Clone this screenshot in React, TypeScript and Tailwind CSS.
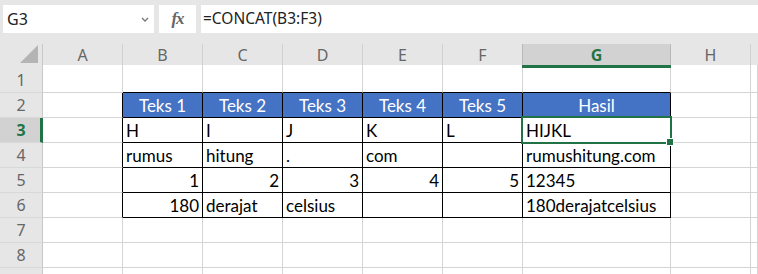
import React from "react";

const cols = ["A", "B", "C", "D", "E", "F", "G", "H", ""];
const GREEN = "#217346";

type CellData = { t: string; align?: "l" | "r" | "c" };

const data: Record<number, CellData[]> = {
  2: [
    { t: "Teks 1", align: "c" },
    { t: "Teks 2", align: "c" },
    { t: "Teks 3", align: "c" },
    { t: "Teks 4", align: "c" },
    { t: "Teks 5", align: "c" },
    { t: "Hasil", align: "c" },
  ],
  3: [{ t: "H" }, { t: "I" }, { t: "J" }, { t: "K" }, { t: "L" }, { t: "HIJKL" }],
  4: [{ t: "rumus" }, { t: "hitung" }, { t: "." }, { t: "com" }, { t: "" }, { t: "rumushitung.com" }],
  5: [
    { t: "1", align: "r" },
    { t: "2", align: "r" },
    { t: "3", align: "r" },
    { t: "4", align: "r" },
    { t: "5", align: "r" },
    { t: "12345" },
  ],
  6: [{ t: "180", align: "r" }, { t: "derajat" }, { t: "celsius" }, { t: "" }, { t: "" }, { t: "180derajatcelsius" }],
};

const cellFont = { fontFamily: "Lato, 'Liberation Sans', sans-serif" };

function BodyCell({ r, c }: { r: number; c: number }) {
  const inTableCol = c >= 1 && c <= 6;
  const rightBlack = r >= 2 && r <= 6 && c >= 0 && c <= 6;
  const bottomBlack = inTableCol && r >= 1 && r <= 6;
  const isHeader = r === 2 && inTableCol;
  const d = inTableCol && data[r] ? data[r][c - 1] : undefined;
  const align = d?.align ?? "l";
  const justify =
    align === "c" ? "justify-center" : align === "r" ? "justify-end pr-[3px]" : "justify-start pl-[3px]";
  return (
    <div
      className={[
        "h-[25px] flex items-end pb-[3px] leading-none text-[17px] whitespace-nowrap overflow-visible border-r border-b",
        rightBlack ? "border-r-black" : "border-r-[#d4d4d4]",
        bottomBlack ? "border-b-black" : "border-b-[#d4d4d4]",
        isHeader ? "bg-[#4472c4] text-white" : "bg-white text-black",
        justify,
      ].join(" ")}
      style={cellFont}
    >
      {d?.t}
    </div>
  );
}

export default function App() {
  const rows = [1, 2, 3, 4, 5, 6, 7, 8, 9];
  return (
    <div className="w-[758px] h-[274px] overflow-hidden bg-white" style={{ fontFamily: "'Noto Sans', 'Open Sans', sans-serif" }}>
      {/* Formula bar */}
      <div className="h-[44px] bg-[#e6e6e6] flex items-start pt-[5px]">
        <div className="ml-[3px] w-[151px] h-[28px] bg-white flex items-center justify-between pl-[4px] pr-[5px]">
          <span className="text-[16px] text-[#222]">G3</span>
          <svg width="8" height="5" viewBox="0 0 8 5">
            <path d="M1 1 L4 4 L7 1" fill="none" stroke="#777" strokeWidth="1.3" />
          </svg>
        </div>
        <div className="ml-[5px] w-[37px] h-[28px] bg-white flex items-center justify-center">
          <span
            className="text-[17px] italic font-bold text-[#666] tracking-[-1px]"
            style={{ fontFamily: "'Liberation Serif', serif" }}
          >
            fx
          </span>
        </div>
        <div className="ml-[5px] flex-1 h-[28px] bg-white flex items-center pl-[2px]">
          <span className="text-[15.5px] text-[#222]">=CONCAT(B3:F3)</span>
        </div>
      </div>

      {/* Grid */}
      <div className="relative">
        <div className="grid grid-cols-[43px_80px_80px_80px_80px_80px_80px_148px_80px_1fr]">
          {/* column header row */}
          <div className="h-[21px] bg-[#e6e6e6] border-r border-r-[#c8c8c8] relative">
            <svg className="absolute right-[4px] bottom-[2px]" width="18" height="18" viewBox="0 0 18 18">
              <path d="M18 0 L18 18 L0 18 Z" fill="#b4b4b4" />
            </svg>
          </div>
          {cols.map((c, i) =>
            c === "G" ? (
              <div
                key={c}
                className="h-[21px] bg-[#d2d2d2] border-l border-l-[#b8b8b8] border-r border-r-[#b8b8b8] -ml-px flex items-center justify-center text-[16px] font-bold"
                style={{ color: GREEN }}
              >
                G
              </div>
            ) : (
              <div
                key={c + i}
                className={`h-[21px] bg-[#e6e6e6] ${i < 8 ? "border-r border-r-[#d0d0d0]" : ""} flex items-center justify-center text-[16px] text-[#666]`}
              >
                {c}
              </div>
            )
          )}
          {/* spacer row */}
          <div className="h-[3px] bg-[#e6e6e6] border-r border-r-[#c8c8c8]" />
          {cols.map((c, i) => (
            <div
              key={"s" + i}
              className={`h-[3px] ${c === "G" ? "bg-[#217346] -ml-px" : "bg-white border-r border-r-[#d4d4d4]"}`}
            />
          ))}
          {/* body rows */}
          {rows.map((r) => (
            <React.Fragment key={r}>
              <div
                className={`h-[25px] flex items-center justify-center border-b border-b-[#d8d8d8] text-[16px] ${
                  r === 3
                    ? "bg-[#d2d2d2] font-bold border-r-[3px] border-r-[#217346] pl-[2px]"
                    : "bg-[#e6e6e6] text-[#666] border-r border-r-[#c8c8c8]"
                }`}
                style={r === 3 ? { color: GREEN } : undefined}
              >
                {r < 9 ? r : ""}
              </div>
              {cols.map((_, c) => (
                <BodyCell key={c} r={r} c={c} />
              ))}
            </React.Fragment>
          ))}
        </div>
        {/* selection box */}
        <div className="absolute left-[521px] top-[72px] w-[151px] h-[28px] border-2 border-[#217346] pointer-events-none" />
        <div className="absolute left-[666px] top-[94px] w-[8px] h-[8px] bg-[#217346] border border-white pointer-events-none" />
      </div>
    </div>
  );
}
